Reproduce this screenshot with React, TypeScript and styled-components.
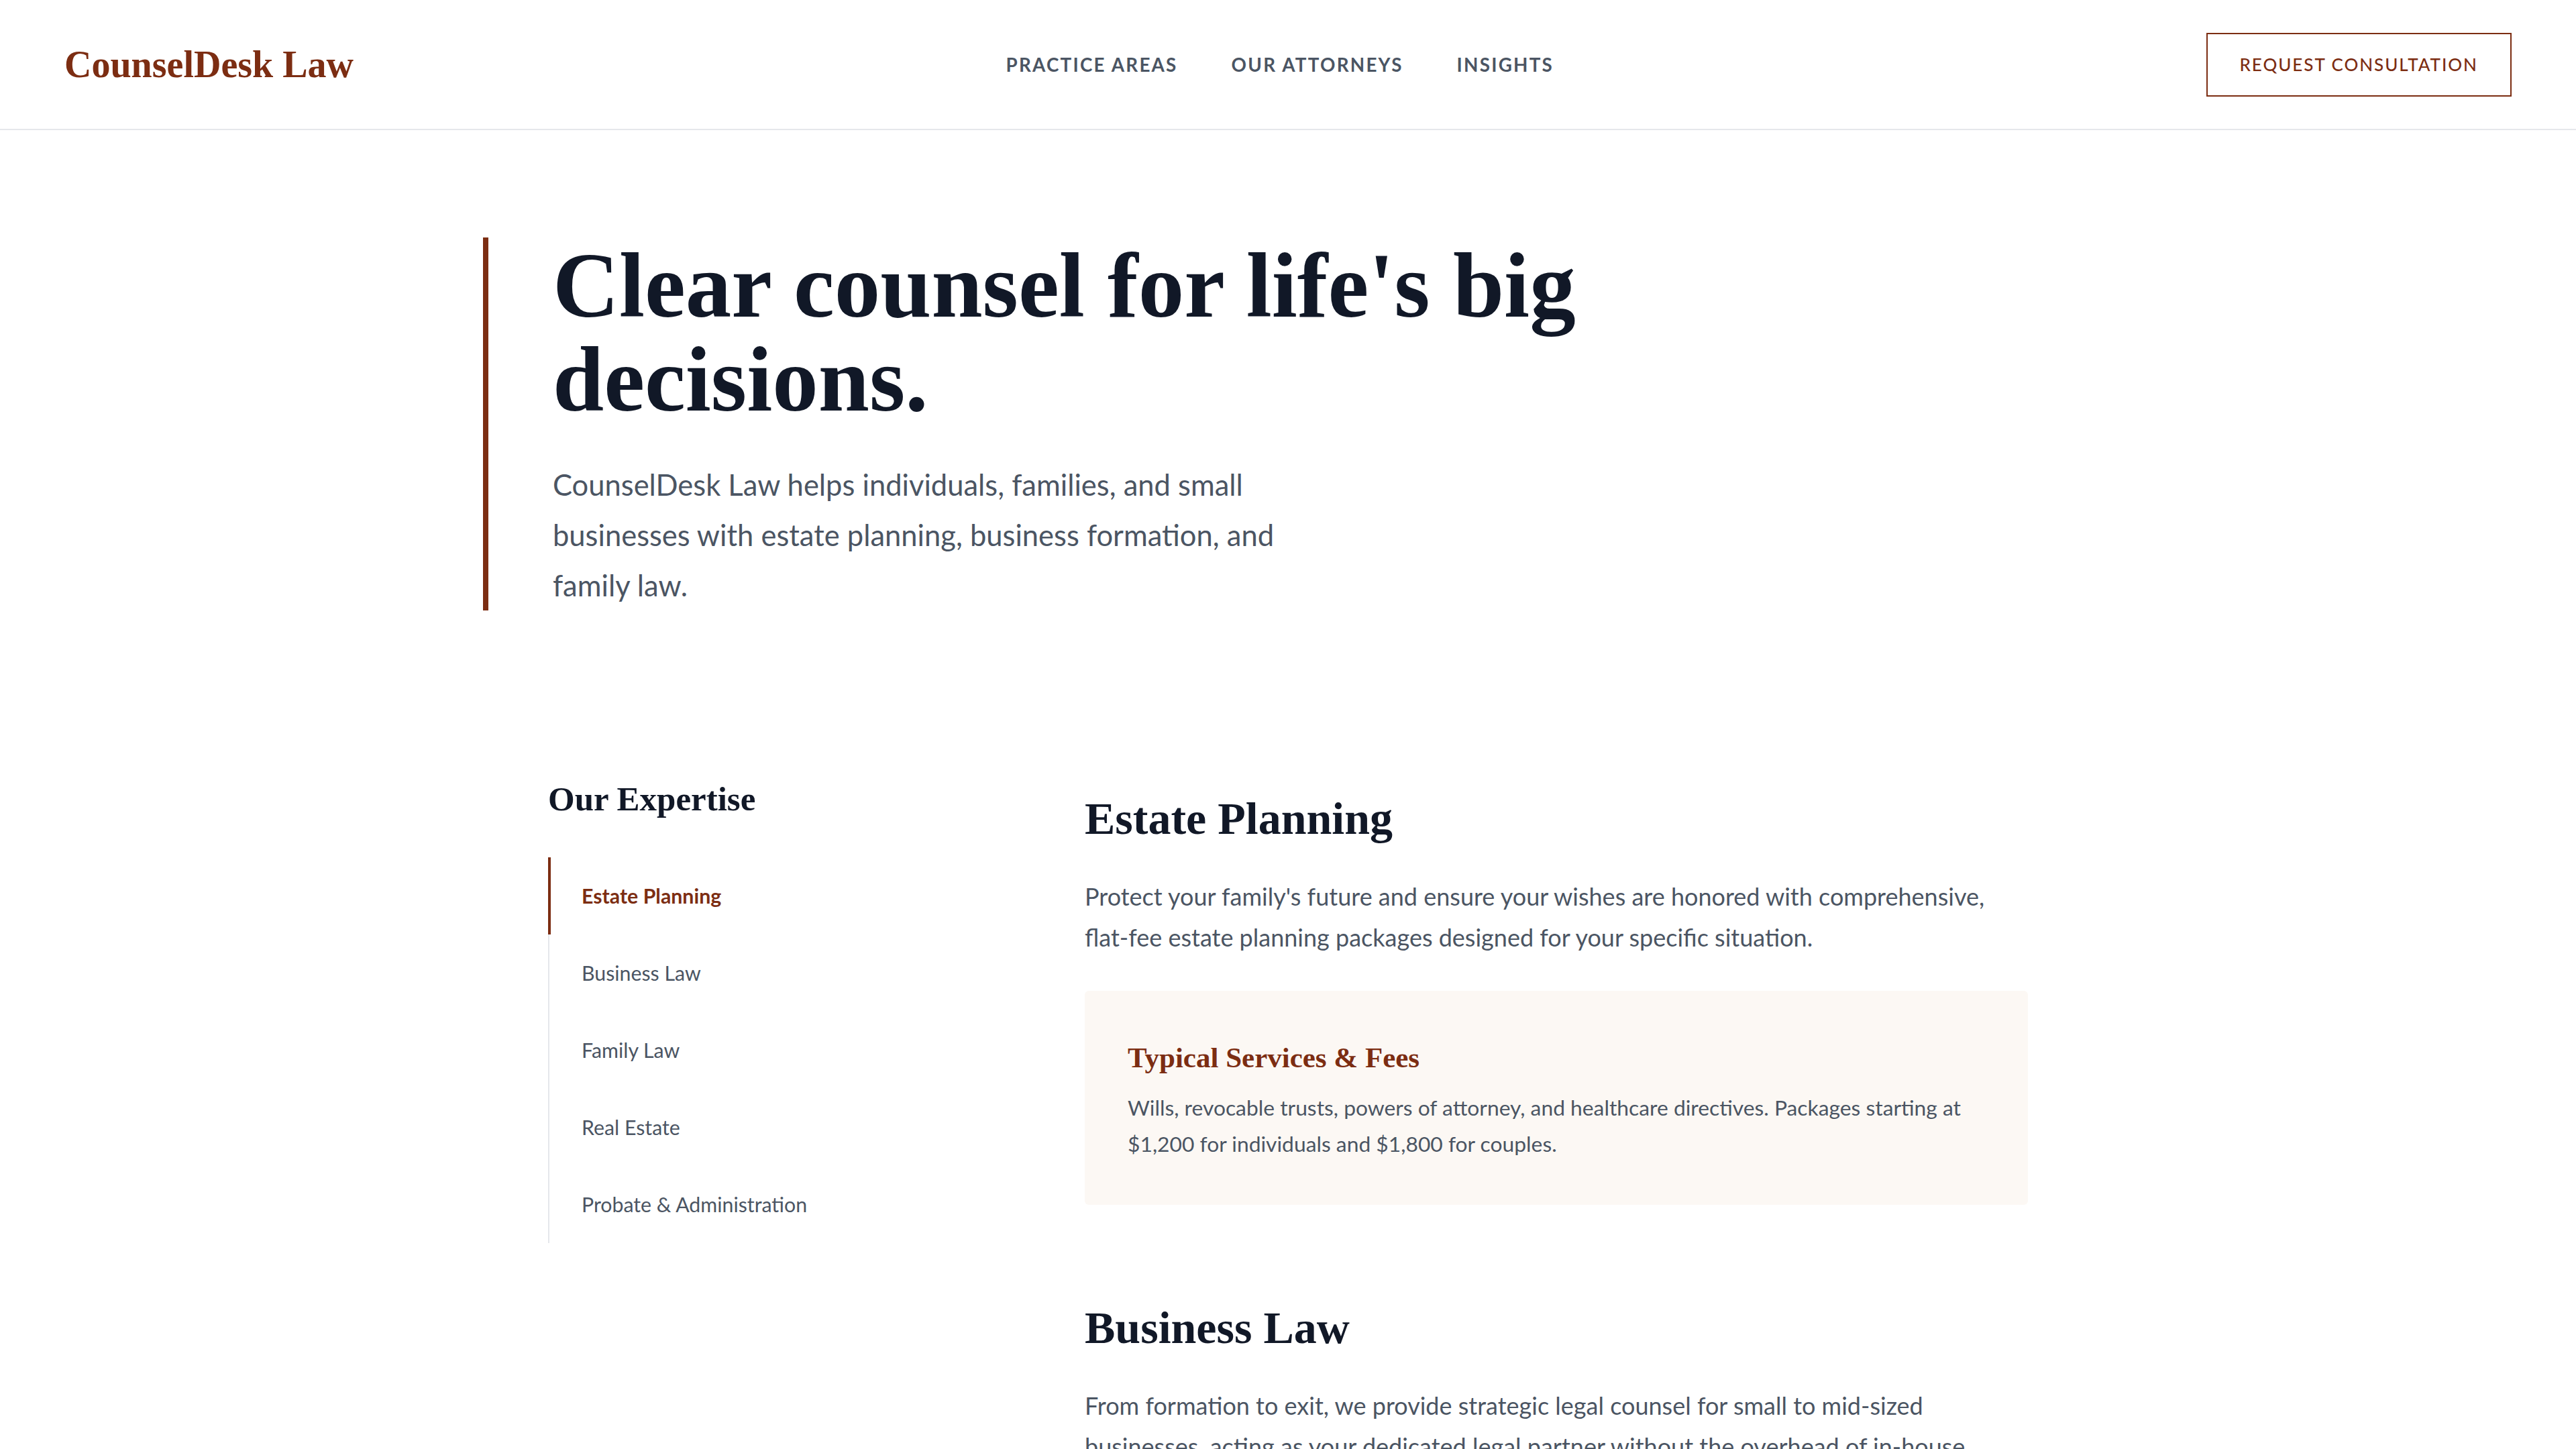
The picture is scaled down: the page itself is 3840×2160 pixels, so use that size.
import React from "react";
import styled, { createGlobalStyle } from "styled-components";

const RUST = "#7c2d12";
const INK = "#111827";
const SLATE = "#4b5563";
const LINE = "#e5e7eb";
const SERIF = `"Liberation Serif", "DejaVu Serif", serif`;
const SANS = `Lato, "Noto Sans", sans-serif`;

const GlobalStyle = createGlobalStyle`
  html, body {
    margin: 0;
    padding: 0;
    background: #ffffff;
  }
  body {
    font-family: ${SANS};
    color: ${INK};
    -webkit-font-smoothing: antialiased;
  }
  h1, h2, h3, h4, p, ul {
    margin: 0;
    padding: 0;
  }
`;

const Header = styled.header`
  height: 192px;
  border-bottom: 2px solid ${LINE};
  padding: 0 96px;
  display: flex;
  align-items: center;
  justify-content: space-between;
`;

const Logo = styled.a`
  font-family: ${SERIF};
  font-weight: 700;
  font-size: 56px;
  color: ${RUST};
  text-decoration: none;
`;

const Nav = styled.nav`
  display: flex;
  gap: 80px;
`;

const NavLink = styled.a`
  font-size: 27.8px;
  font-weight: 700;
  letter-spacing: 0.08em;
  text-transform: uppercase;
  color: ${SLATE};
  text-decoration: none;
`;

const ConsultButton = styled.button`
  font-family: ${SANS};
  font-size: 26px;
  font-weight: 500;
  letter-spacing: 0.075em;
  text-transform: uppercase;
  color: ${RUST};
  background: transparent;
  border: 2px solid ${RUST};
  height: 95px;
  padding: 0 48px;
  cursor: pointer;
`;

const Hero = styled.section`
  max-width: 2400px;
  margin: 0 auto;
  padding: 160px 0 128px;
`;

const HeroInner = styled.div`
  border-left: 8px solid ${RUST};
  padding-left: 96px;
`;

const HeroTitle = styled.h1`
  font-family: ${SERIF};
  font-size: 137px;
  line-height: 140px;
  font-weight: 700;
  color: ${INK};
  max-width: 1700px;
  padding-top: 2px;
`;

const HeroLead = styled.p`
  margin-top: 49px;
  font-size: 43.5px;
  line-height: 75px;
  color: ${SLATE};
  max-width: 1140px;
`;

const Expertise = styled.section`
  max-width: 2206px;
  margin: 0 auto;
  padding: 121px 0 200px;
  display: grid;
  grid-template-columns: 600px 1fr;
  column-gap: 200px;
  align-items: start;
`;

const Sidebar = styled.aside`
  padding-top: 2px;
`;

const SidebarTitle = styled.h3`
  font-family: ${SERIF};
  font-size: 51px;
  line-height: 1.2;
  font-weight: 700;
  color: ${INK};
  margin-bottom: 56px;
`;

const AreaList = styled.ul`
  list-style: none;
`;

const AreaItem = styled.li<{ $active?: boolean }>`
  border-left: ${(p) => (p.$active ? `4px solid ${RUST}` : `2px solid ${LINE}`)};
  padding: 39px 0 39px ${(p) => (p.$active ? 46 : 48)}px;
  font-size: 30.3px;
  line-height: 37px;
  font-weight: ${(p) => (p.$active ? 700 : 400)};
  color: ${(p) => (p.$active ? RUST : SLATE)};
  cursor: pointer;
`;

const Main = styled.div`
  padding-top: 21px;
  display: flex;
  flex-direction: column;
  gap: 143px;
`;

const Practice = styled.article``;

const PracticeTitle = styled.h2`
  font-family: ${SERIF};
  font-size: 68px;
  line-height: 1.2;
  font-weight: 700;
  color: ${INK};
  margin-bottom: 44px;
`;

const PracticeText = styled.p`
  font-size: 36px;
  line-height: 61px;
  color: ${SLATE};
`;

const FeeCard = styled.div`
  margin-top: 49px;
  background: #fcf8f4;
  border-radius: 6px;
  padding: 72px 64px 64px;
`;

const FeeTitle = styled.h4`
  font-family: ${SERIF};
  font-size: 43px;
  line-height: 1.3;
  font-weight: 700;
  color: ${RUST};
  margin-bottom: 20px;
`;

const FeeText = styled.p`
  font-size: 31.8px;
  line-height: 54px;
  color: ${SLATE};
`;

const areas = [
  {
    name: "Estate Planning",
    text: "Protect your family's future and ensure your wishes are honored with comprehensive, flat-fee estate planning packages designed for your specific situation.",
    fees: "Wills, revocable trusts, powers of attorney, and healthcare directives. Packages starting at $1,200 for individuals and $1,800 for couples.",
  },
  {
    name: "Business Law",
    text: "From formation to exit, we provide strategic legal counsel for small to mid-sized businesses, acting as your dedicated legal partner without the overhead of in-house counsel.",
    fees: "Entity formation, operating agreements, contract drafting and review, and ongoing general counsel retainers. Formation packages starting at $950.",
  },
  {
    name: "Family Law",
    text: "Compassionate, practical guidance through divorce, custody, and support matters, with a focus on resolving disputes respectfully and protecting what matters most.",
    fees: "Uncontested divorce, custody and parenting plans, prenuptial agreements, and mediation. Consultations starting at $250.",
  },
  {
    name: "Real Estate",
    text: "Clear, careful representation for residential and commercial transactions, from purchase agreements to closing and title review.",
    fees: "Purchase and sale agreements, lease review, title issues, and closings. Flat-fee closings starting at $850.",
  },
  {
    name: "Probate & Administration",
    text: "We guide executors and families through probate and trust administration efficiently, so estates are settled correctly and without unnecessary delay.",
    fees: "Probate filings, estate inventories, creditor notices, and final distributions. Administration starting at $2,500.",
  },
];

export default function App() {
  return (
    <>
      <GlobalStyle />
      <Header>
        <Logo href="#">CounselDesk Law</Logo>
        <Nav>
          <NavLink href="#">Practice Areas</NavLink>
          <NavLink href="#">Our Attorneys</NavLink>
          <NavLink href="#">Insights</NavLink>
        </Nav>
        <ConsultButton>Request Consultation</ConsultButton>
      </Header>

      <Hero>
        <HeroInner>
          <HeroTitle>Clear counsel for life's big decisions.</HeroTitle>
          <HeroLead>
            CounselDesk Law helps individuals, families, and small businesses
            with estate planning, business formation, and family law.
          </HeroLead>
        </HeroInner>
      </Hero>

      <Expertise>
        <Sidebar>
          <SidebarTitle>Our Expertise</SidebarTitle>
          <AreaList>
            {areas.map((area, i) => (
              <AreaItem key={area.name} $active={i === 0}>
                {area.name}
              </AreaItem>
            ))}
          </AreaList>
        </Sidebar>

        <Main>
          {areas.map((area) => (
            <Practice key={area.name}>
              <PracticeTitle>{area.name}</PracticeTitle>
              <PracticeText>{area.text}</PracticeText>
              <FeeCard>
                <FeeTitle>Typical Services &amp; Fees</FeeTitle>
                <FeeText>{area.fees}</FeeText>
              </FeeCard>
            </Practice>
          ))}
        </Main>
      </Expertise>
    </>
  );
}
